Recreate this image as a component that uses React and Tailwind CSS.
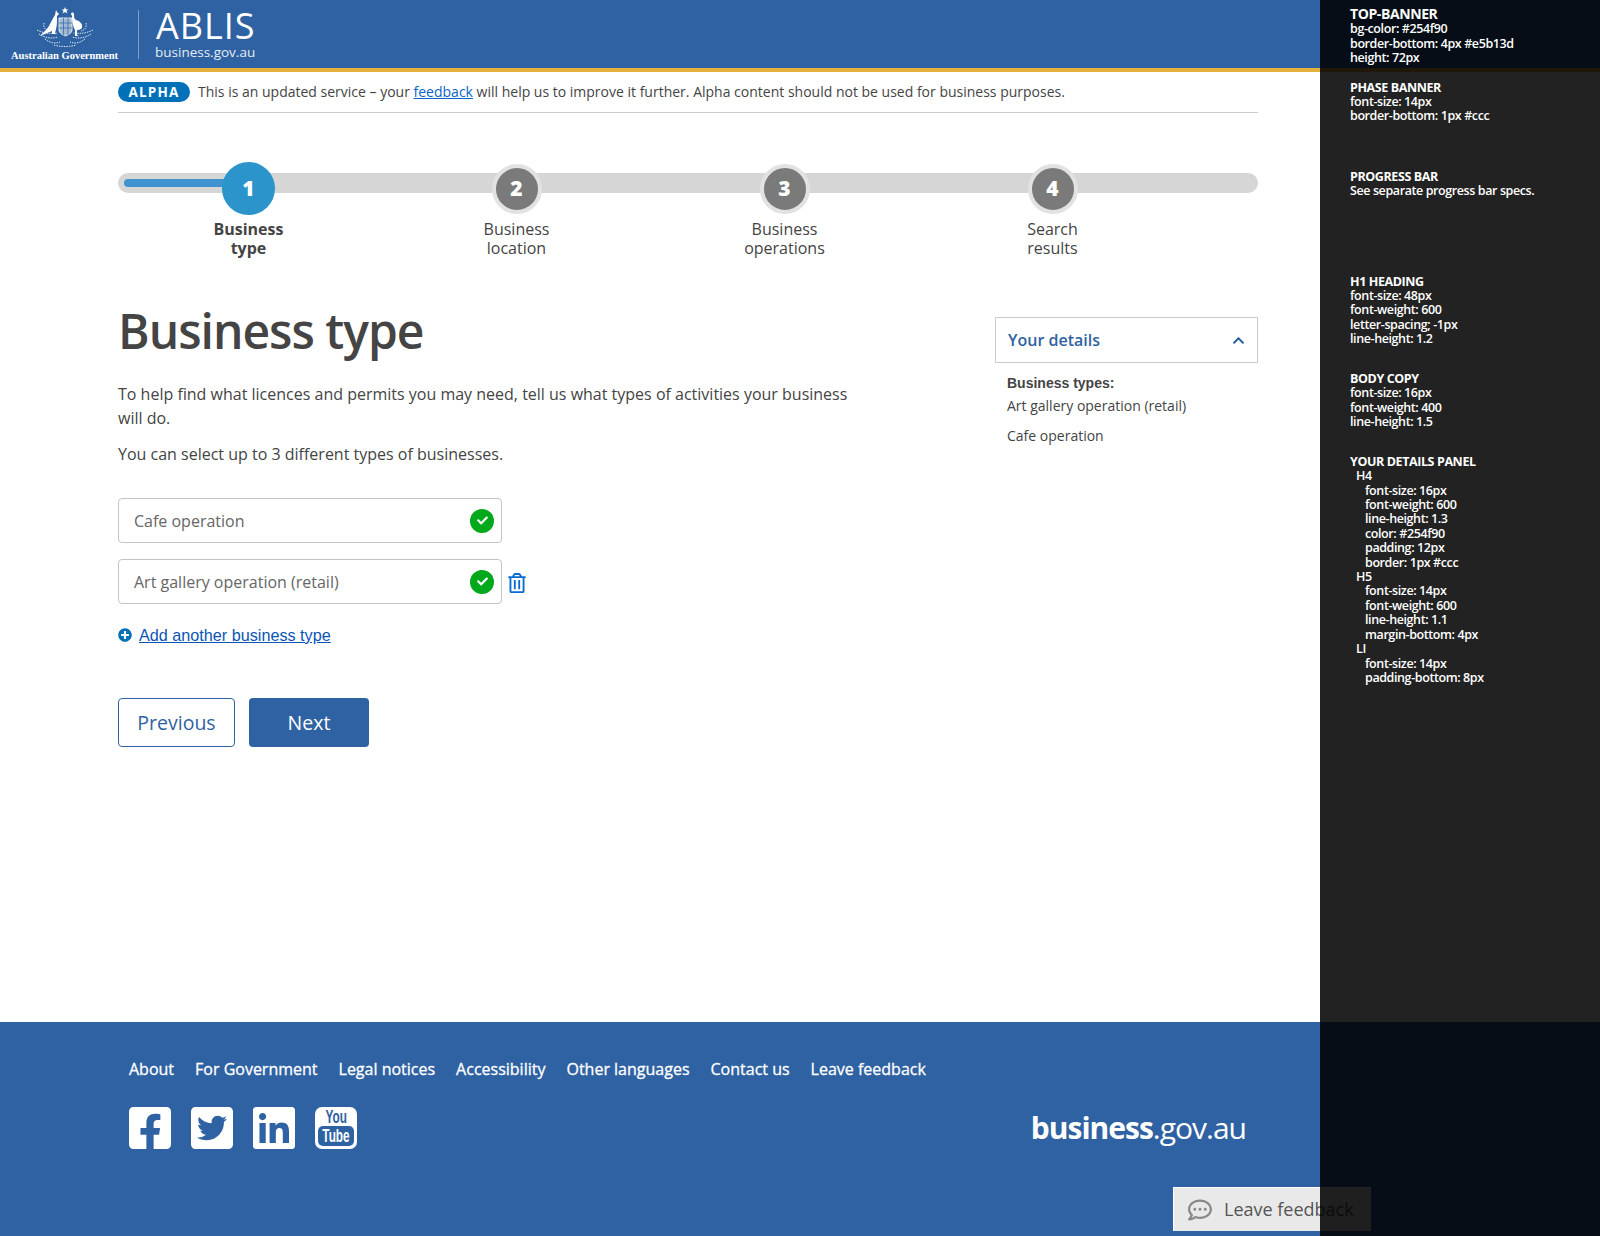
import { FaFacebookSquare, FaTwitterSquare, FaLinkedin, FaPlusCircle, FaRegTrashAlt, FaRegCommentDots, FaCheck, FaChevronUp } from 'react-icons/fa';

const steps = [
  { n: '1', label: ['Business', 'type'], active: true },
  { n: '2', label: ['Business', 'location'] },
  { n: '3', label: ['Business', 'operations'] },
  { n: '4', label: ['Search', 'results'] },
];

const footerLinks = ['About', 'For Government', 'Legal notices', 'Accessibility', 'Other languages', 'Contact us', 'Leave feedback'];

function Crest() {
  return (
    <svg width="60" height="42" viewBox="0 0 60 42" fill="none" className="shrink-0">
      {/* wreath */}
      <g stroke="white" strokeWidth="1" strokeDasharray="1.5 1" opacity="0.85">
        <path d="M2 23 C8 26 14 27 22 26 M58 23 C52 26 46 27 38 26" />
        <path d="M4 27 C10 31 16 32 23 30 M56 27 C50 31 44 32 37 30" />
        <path d="M9 16 C8 20 10 23 14 24 M51 16 C52 20 50 23 46 24" />
        <path d="M10 32 C15 36 20 37 25 35 M50 32 C45 36 40 37 35 35" />
        <path d="M19 38 C25 40 35 40 41 38" />
      </g>
      {/* shield */}
      <path d="M24 11 H37 V23 C37 26 33 28 30.5 29 C28 28 24 26 24 23 Z" fill="white" fillOpacity="0.55" stroke="white" strokeWidth="0.8" />
      <path d="M28.5 11 V28 M33 11 V28 M24 16 H37 M24 21 H37" stroke="#2f62a2" strokeWidth="0.7" />
      {/* kangaroo */}
      <path d="M21 3 L22 5 L24 7 L22 9 L22 14 C22 19 21 22 20 26 L22 27 L17 27 L17 24 C13 26 9 27 5 29 C8 26 12 22 14 19 C16 15 18 11 20 8 Z" fill="white" />
      {/* emu */}
      <path d="M36 7 C36 5 39 5 39 7 C39 10 39 12 41 13 C45 14 48 17 47 21 C45 23 43 23 42 23 L42 28 L44 29 L40 29 L40 23 C38 20 37 14 37 9 Z" fill="white" />
      {/* star */}
      <path d="M30 0 L31 2.5 L33.5 2.5 L31.5 4 L32.5 6.5 L30 5 L27.5 6.5 L28.5 4 L26.5 2.5 L29 2.5 Z" fill="white" />
    </svg>
  );
}

function YoutubeIcon() {
  return (
    <div className="w-[42px] h-[42px] rounded-[7px] bg-white flex flex-col items-center text-[#2f62a2] font-['Liberation_Sans',sans-serif] overflow-hidden">
      <div className="h-[19px] text-[19px] leading-[19px] font-bold scale-x-[0.62]">You</div>
      <div className="w-[36px] h-[20px] rounded-[5px] bg-[#2f62a2] text-white text-[19px] leading-[20px] font-bold text-center whitespace-nowrap">
        <span className="inline-block scale-x-[0.62] -mx-[6px]">Tube</span>
      </div>
    </div>
  );
}

function Field({ value, trash }) {
  return (
    <div className="flex items-center">
      <div className="w-[384px] h-[45px] rounded border border-[#c4c4c4] pl-[15px] pr-[7px] flex items-center justify-between text-[#666]">
        <span>{value}</span>
        <span className="w-6 h-6 rounded-full bg-[#00a81c] flex items-center justify-center text-white">
          <FaCheck size={11} />
        </span>
      </div>
      {trash && <FaRegTrashAlt size={20} className="ml-[5px] mt-[2px] text-[#0a6cd0]" />}
    </div>
  );
}

function Spec({ className, title, lines }) {
  return (
    <div className={className}>
      <div className="font-bold">{title}</div>
      {lines.map((l) => (
        <div key={l}>{l}</div>
      ))}
    </div>
  );
}

export default function App() {
  return (
    <div className="relative w-[1600px] h-[1236px] overflow-hidden flex flex-col bg-white text-[16px] text-[#444] font-['Open_Sans',sans-serif]">
      {/* top banner */}
      <header className="h-[72px] shrink-0 bg-[#2f62a2] border-b-4 border-[#e5b13d] flex text-white">
        <div className="w-[138px] pl-[11px] pt-[7px] flex flex-col items-start">
          <div className="w-[108px] flex justify-center">
            <Crest />
          </div>
          <div className="text-[10.5px] leading-[12px] mt-[1px] font-bold whitespace-nowrap font-['Liberation_Serif',serif]">Australian Government</div>
        </div>
        <div className="mt-[10px] h-[49px] w-px bg-[#7f9fc7]" />
        <div className="ml-[17px] pt-[4px]">
          <div className="text-[36px] leading-[44px] tracking-[1px]">ABLIS</div>
          <div className="text-[13.5px] leading-[16px] -mt-[4px] -ml-px text-[#e4ebf4]">business.gov.au</div>
        </div>
      </header>

      <main className="flex-1 w-[1140px] ml-[118px]">
        {/* phase banner */}
        <div className="h-[41px] border-b border-[#ccc] flex items-center text-[14px]">
          <span className="w-[72px] h-[20px] rounded-full bg-[#0071b9] text-white font-bold text-[13.5px] tracking-[1.2px] leading-[20px] text-center">ALPHA</span>
          <span className="ml-[8px] -mt-[2px]">
            This is an updated service – your <a className="text-[#0a63c9] underline">feedback</a> will help us to improve it further. Alpha content should not be used for business purposes.
          </span>
        </div>

        {/* progress bar */}
        <div className="relative h-[143px] mt-[47px]">
          <div className="absolute left-0 right-0 top-[13px] h-[20px] rounded-full bg-[#d6d6d6]">
            <div className="ml-[6px] mt-[6px] w-[110px] h-[8px] rounded-l-full bg-[#3f94cf]" />
          </div>
          <div className="relative flex -ml-[3.5px] pt-[2px]">
            {steps.map((s) => (
              <div key={s.n} className="w-[268px] flex flex-col items-center text-center leading-[18.5px]">
                <div className="h-[53px] flex items-center justify-center">
                  {s.active ? (
                    <div className="w-[53px] h-[53px] rounded-full bg-[#2a94cb] text-white text-[21px] font-extrabold flex items-center justify-center">{s.n}</div>
                  ) : (
                    <div className="w-[42px] h-[42px] box-content border-[4px] border-[#e2e2e2] rounded-full bg-[#7a7a7a] text-white text-[21px] font-extrabold flex items-center justify-center">{s.n}</div>
                  )}
                </div>
                <div className={`mt-[5px] ${s.active ? 'font-bold' : ''}`}>
                  {s.label.map((l) => (
                    <div key={l}>{l}</div>
                  ))}
                </div>
              </div>
            ))}
          </div>
        </div>

        <div className="flex justify-between">
          {/* form */}
          <div className="w-[730px]">
            <h1 className="text-[48px] leading-[58px] font-semibold tracking-[-1px] -mt-[1px]">Business type</h1>
            <p className="mt-[22px] leading-[24px]">To help find what licences and permits you may need, tell us what types of activities your business will do.</p>
            <p className="mt-[12px] leading-[24px]">You can select up to 3 different types of businesses.</p>
            <div className="mt-[32px] flex flex-col gap-[16px]">
              <Field value="Cafe operation" />
              <Field value="Art gallery operation (retail)" trash />
            </div>
            <div className="mt-[21px] flex items-center text-[16.2px] font-['Liberation_Sans',sans-serif] leading-[20px]">
              <FaPlusCircle size={14} className="text-[#0071b9]" />
              <a className="ml-[7px] text-[#0a55b5] underline">Add another business type</a>
            </div>
            <div className="mt-[53px] flex gap-[14px] text-[19.5px]">
              <button className="w-[117px] h-[49px] rounded border border-[#2f62a2] text-[#2f62a2]">Previous</button>
              <button className="w-[120px] h-[49px] rounded bg-[#2f62a2] text-white">Next</button>
            </div>
          </div>

          {/* your details */}
          <aside className="w-[263px] text-[14px]">
            <div className="mt-[14px] h-[46px] border border-[#ccc] pl-[12px] pr-[12px] flex items-center justify-between text-[16px] font-semibold text-[#2f62a2]">
              <span>Your details</span>
              <FaChevronUp size={13} />
            </div>
            <div className="pl-[12px]">
              <div className="mt-[12px] leading-[16px] font-bold font-['Liberation_Sans',sans-serif]">Business types:</div>
              <div className="mt-[5px] leading-[20px]">Art gallery operation (retail)</div>
              <div className="mt-[10px] leading-[20px]">Cafe operation</div>
            </div>
          </aside>
        </div>
      </main>

      <footer className="h-[214px] shrink-0 bg-[#2f62a2] text-white pl-[129px] pr-[354px] pt-[35px]">
        <nav className="flex gap-[21px] leading-[24px] font-normal [-webkit-text-stroke:0.3px_white]">
          {footerLinks.map((l) => (
            <a key={l}>{l}</a>
          ))}
        </nav>
        <div className="mt-[26px] flex items-center justify-between">
          <div className="flex gap-[20px]">
            {[FaFacebookSquare, FaTwitterSquare, FaLinkedin].map((Icon, i) => (
              <div key={i} className="w-[42px] h-[42px] flex items-center justify-center">
                <Icon size={48} className="shrink-0" />
              </div>
            ))}
            <YoutubeIcon />
          </div>
          <div className="text-[30px] leading-[40px] tracking-[-1px]">
            <span className="font-bold">business</span>.gov.au
          </div>
        </div>
      </footer>

      {/* feedback tab */}
      <div className="absolute left-[1173px] top-[1187px] w-[198px] h-[44px] bg-[#e9e9e9] border border-white border-r-0 border-b-0 flex items-center pl-[14px] text-[18px] text-[#555]">
        <FaRegCommentDots size={24} className="text-[#888]" />
        <span className="ml-[12px] whitespace-nowrap">Leave feedback</span>
      </div>

      {/* spec panel */}
      <aside className="absolute right-0 top-0 bottom-0 w-[280px] bg-[#000000dd] text-white text-[12.5px] leading-[14.4px] font-semibold pl-[30px] pt-[7px] tracking-[-0.4px]">
        <Spec title={<span className="text-[14px]">TOP-BANNER</span>} lines={['bg-color: #254f90', 'border-bottom: 4px #e5b13d', 'height: 72px']} />
        <Spec className="mt-[15px]" title="PHASE BANNER" lines={['font-size: 14px', 'border-bottom: 1px #ccc']} />
        <Spec className="mt-[46px]" title="PROGRESS BAR" lines={['See separate progress bar specs.']} />
        <Spec className="mt-[76px]" title="H1 HEADING" lines={['font-size: 48px', 'font-weight: 600', 'letter-spacing; -1px', 'line-height: 1.2']} />
        <Spec className="mt-[25px]" title="BODY COPY" lines={['font-size: 16px', 'font-weight: 400', 'line-height: 1.5']} />
        <div className="mt-[25.5px]">
          <div className="font-bold">YOUR DETAILS PANEL</div>
          <div className="pl-[6px]">H4</div>
          <div className="pl-[15px]">
            <div>font-size: 16px</div>
            <div>font-weight: 600</div>
            <div>line-height: 1.3</div>
            <div>color: #254f90</div>
            <div>padding: 12px</div>
            <div>border: 1px #ccc</div>
          </div>
          <div className="pl-[6px]">H5</div>
          <div className="pl-[15px]">
            <div>font-size: 14px</div>
            <div>font-weight: 600</div>
            <div>line-height: 1.1</div>
            <div>margin-bottom: 4px</div>
          </div>
          <div className="pl-[6px]">LI</div>
          <div className="pl-[15px]">
            <div>font-size: 14px</div>
            <div>padding-bottom: 8px</div>
          </div>
        </div>
      </aside>
    </div>
  );
}
